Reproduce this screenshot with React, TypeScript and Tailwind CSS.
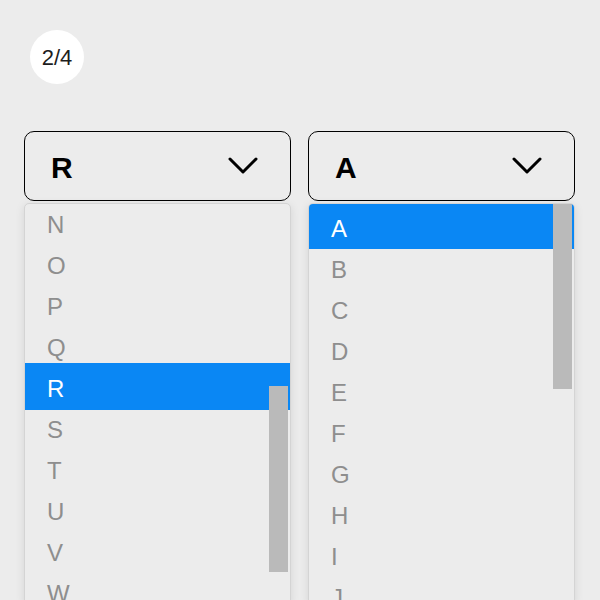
const leftItems = ["N", "O", "P", "Q", "R", "S", "T", "U", "V", "W", "X"];
const rightItems = ["A", "B", "C", "D", "E", "F", "G", "H", "I", "J", "K"];

function Chevron() {
  return (
    <svg width="30" height="18" viewBox="0 0 30 18" fill="none">
      <polyline points="2,2 15,15 28,2" stroke="black" strokeWidth="3" strokeLinecap="round" strokeLinejoin="round" />
    </svg>
  );
}

function SelectBox({ value }: { value: string }) {
  return (
    <div className="h-[70px] border border-black rounded-[10px] flex items-center justify-between pl-[26px] pr-[32px]">
      <span className="text-[30px] font-bold text-black pt-[2px]">{value}</span>
      <Chevron />
    </div>
  );
}

export default function App() {
  return (
    <div
      className="w-[600px] h-[600px] bg-[#ececec] overflow-hidden"
      style={{ fontFamily: '"Liberation Sans", Arial, sans-serif' }}
    >
      {/* contador */}
      <div className="ml-[30px] mt-[30px] w-[54px] h-[54px] rounded-full bg-white flex items-center justify-center text-[22px] text-[#1d1d1d]">
        2/4
      </div>

      <div className="mt-[47px] px-[24px] flex gap-[17px]">
        {/* Selector izquierdo */}
        <div className="w-[267px] flex flex-col">
          <SelectBox value="R" />
          <div className="relative mt-[2px] h-[400px] border border-[#d4d4d4] rounded-t-[5px] bg-[#ececec] shadow-[0_2px_10px_rgba(0,0,0,0.1)] overflow-hidden">
            {leftItems.map((item) => {
              const active = item === "R";
              return (
                <div key={item} className="relative h-[41px] flex items-center pl-[22px]">
                  {active && <div className="absolute left-0 right-0 -top-[5px] -bottom-[1px] bg-[#0a87f4]" />}
                  <span className={`relative text-[24px] ${active ? "text-white" : "text-[#8e8e8e]"}`}>{item}</span>
                </div>
              );
            })}
            <div className="absolute right-[2px] top-[182px] w-[19px] h-[186px] bg-[#bababa]" />
          </div>
        </div>

        {/* Selector derecho */}
        <div className="w-[267px] flex flex-col">
          <SelectBox value="A" />
          <div className="relative mt-[2px] h-[400px] border border-[#d4d4d4] rounded-t-[5px] bg-[#ececec] shadow-[0_2px_10px_rgba(0,0,0,0.1)] overflow-hidden">
            {rightItems.map((item) => {
              const active = item === "A";
              return (
                <div
                  key={item}
                  className={`flex items-center pl-[22px] text-[24px] ${
                    active ? "h-[45px] pt-[4px] bg-[#0a87f4] text-white" : "h-[41px] text-[#8e8e8e]"
                  }`}
                >
                  {item}
                </div>
              );
            })}
            <div className="absolute right-[2px] top-0 w-[19px] h-[185px] bg-[#bababa]" />
          </div>
        </div>
      </div>
    </div>
  );
}
